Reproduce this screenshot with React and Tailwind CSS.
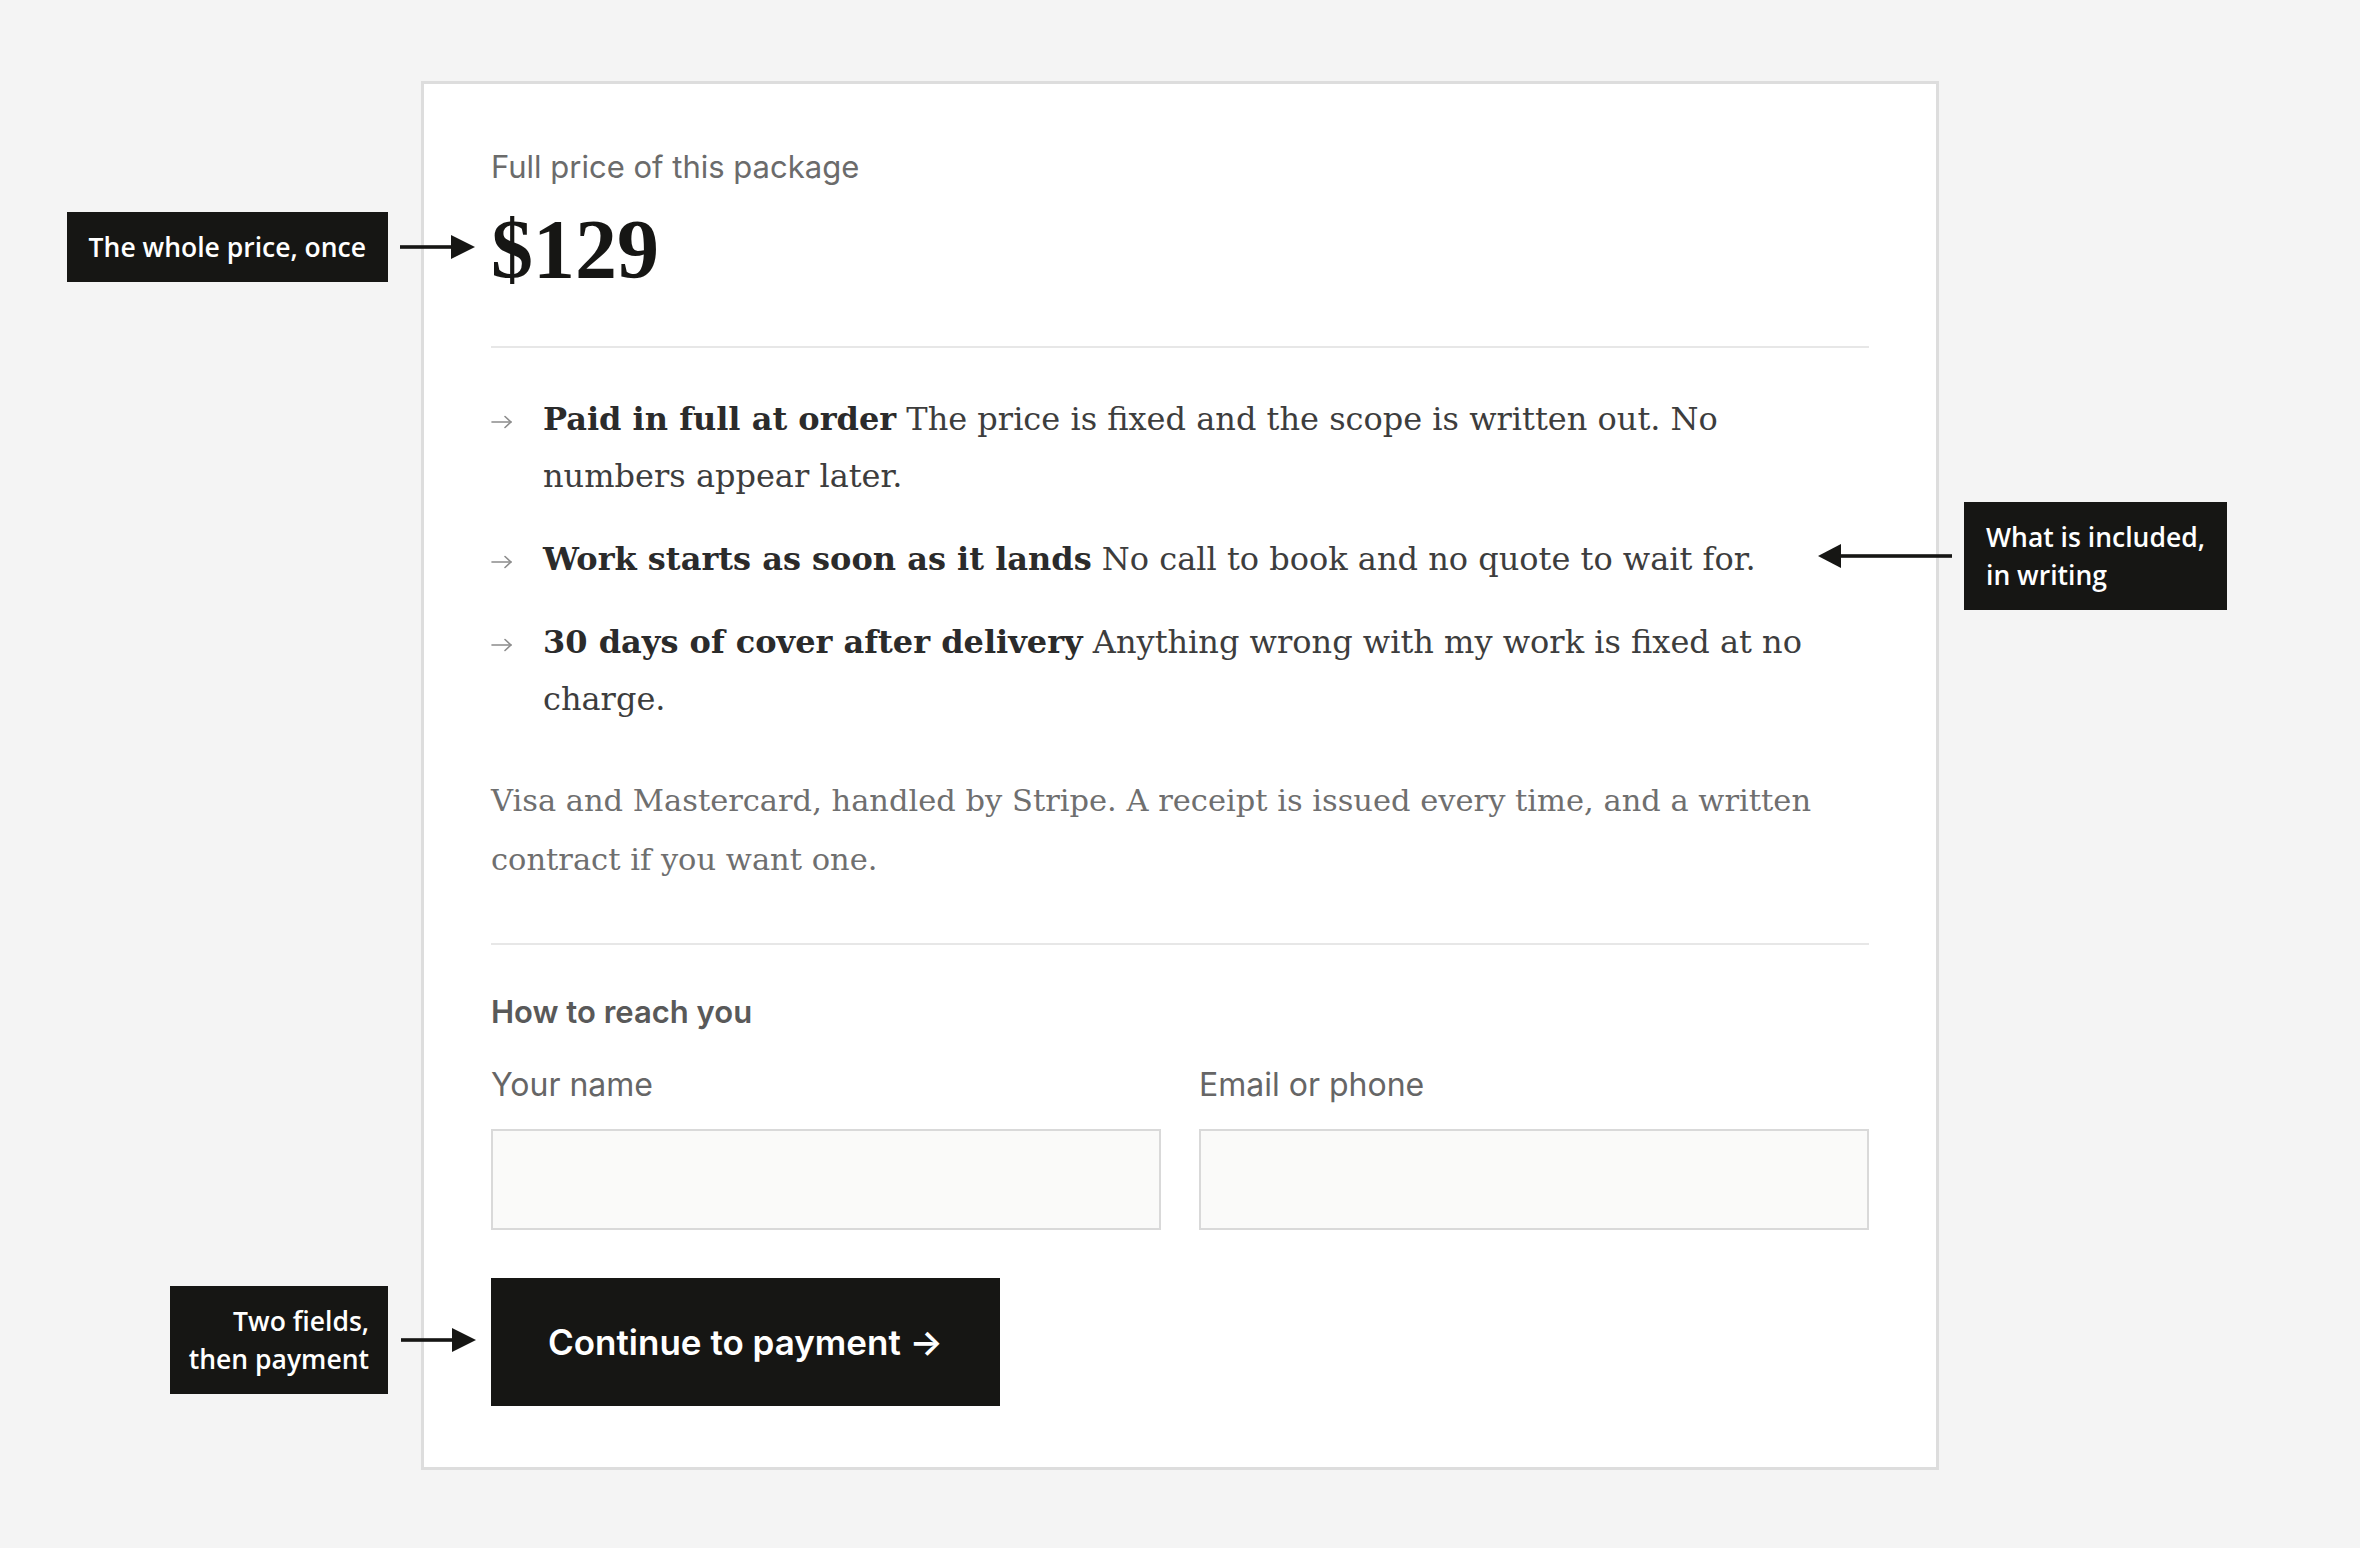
import React from "react";

function BulletArrow() {
  return (
    <svg width="22" height="14" viewBox="0 0 22 14" fill="none" stroke="#8c8c8c" strokeWidth="1.6" strokeLinecap="round" strokeLinejoin="round">
      <line x1="1" y1="7" x2="20" y2="7" />
      <polyline points="14,1.5 20,7 14,12.5" />
    </svg>
  );
}

function RightArrow({ width }) {
  return (
    <svg width={width} height="24" viewBox={`0 0 ${width} 24`}>
      <rect x="0" y="10.2" width={width - 20} height="3.6" fill="#161614" />
      <polygon points={`${width - 24},0 ${width},12 ${width - 24},24`} fill="#161614" />
    </svg>
  );
}

function LeftArrow({ width }) {
  return (
    <svg width={width} height="24" viewBox={`0 0 ${width} 24`}>
      <rect x="20" y="10.2" width={width - 20} height="3.6" fill="#161614" />
      <polygon points="0,12 23,0 23,24" fill="#161614" />
    </svg>
  );
}

const bullets = [
  ["Paid in full at order", "The price is fixed and the scope is written out. No numbers appear later."],
  ["Work starts as soon as it lands", "No call to book and no quote to wait for."],
  ["30 days of cover after delivery", "Anything wrong with my work is fixed at no charge."],
];

export default function App() {
  return (
    <div className="min-h-screen bg-[#f4f4f4] pt-[81px] pb-[81px]">
      <div className="relative mx-auto w-[1518px]">
        <div className="border-[3px] border-[#dddddd] bg-white px-[67px] pt-[65px] pb-[61px]">
          <div className="font-['Inter',sans-serif] text-[31px] leading-[36px] text-[#6b6b6b]">
            Full price of this package
          </div>
          <div className="mt-[25px] font-['Liberation_Serif',serif] text-[84px] font-bold leading-[80px] text-[#161614]">
            $129
          </div>
          <div className="mt-[56px] h-[2px] bg-[#e7e7e7]" />

          <ul className="mt-[43px] flex flex-col gap-[26px]">
            {bullets.map(([b, t]) => (
              <li key={b} className="flex">
                <span className="flex h-[57px] w-[52px] shrink-0 items-center pt-[5px]">
                  <BulletArrow />
                </span>
                <p className="max-w-[1300px] font-['DejaVu_Serif',serif] text-[32px] leading-[57px] text-[#3d3d3d]">
                  <strong className="font-bold text-[#2b2b2b]">{b}</strong> {t}
                </p>
              </li>
            ))}
          </ul>

          <p className="mt-[43px] font-['DejaVu_Serif',serif] text-[30.5px] leading-[59px] text-[#6f6f6f]">
            Visa and Mastercard, handled by Stripe. A receipt is issued every time, and a written contract if you want one.
          </p>

          <div className="mt-[54px] h-[2px] bg-[#e7e7e7]" />

          <div className="mt-[49px] font-['Inter',sans-serif] text-[31px] font-semibold leading-[36px] text-[#595959]">
            How to reach you
          </div>

          <div className="mt-[36px] grid grid-cols-2 gap-[38px]">
            <div>
              <label className="block font-['Inter',sans-serif] text-[32px] leading-[38px] text-[#666666]">Your name</label>
              <input type="text" className="mt-[25px] block h-[101px] w-full border-2 border-[#d9d9d9] bg-[#fafaf9] outline-none" />
            </div>
            <div>
              <label className="block font-['Inter',sans-serif] text-[32px] leading-[38px] text-[#666666]">Email or phone</label>
              <input type="text" className="mt-[25px] block h-[101px] w-full border-2 border-[#d9d9d9] bg-[#fafaf9] outline-none" />
            </div>
          </div>

          <button className="mt-[48px] flex h-[128px] items-center bg-[#161614] px-[57px] font-['Inter',sans-serif] text-[35px] font-semibold text-white">
            Continue to payment →
          </button>
        </div>

        {/* Annotation 1 */}
        <div className="absolute right-[calc(100%+33px)] top-[131px] whitespace-nowrap bg-[#161614] px-[22px] py-[16px] font-['Open_Sans',sans-serif] text-[26.5px] font-semibold leading-[38px] text-white">
          The whole price, once
        </div>
        <div className="absolute left-[-21px] top-[154px]">
          <RightArrow width={75} />
        </div>

        {/* Annotation 2 */}
        <div className="absolute left-[1543px] top-[421px] whitespace-nowrap bg-[#161614] px-[22px] py-[16px] font-['Open_Sans',sans-serif] text-[26.5px] font-semibold leading-[38px] text-white">
          What is included,
          <br />
          in writing
        </div>
        <div className="absolute left-[1397px] top-[463px]">
          <LeftArrow width={134} />
        </div>

        {/* Annotation 3 */}
        <div className="absolute right-[calc(100%+33px)] top-[1205px] whitespace-nowrap bg-[#161614] px-[19px] py-[16px] text-right font-['Open_Sans',sans-serif] text-[26.5px] font-semibold leading-[38px] text-white">
          Two fields,
          <br />
          then payment
        </div>
        <div className="absolute left-[-20px] top-[1247px]">
          <RightArrow width={75} />
        </div>
      </div>
    </div>
  );
}
